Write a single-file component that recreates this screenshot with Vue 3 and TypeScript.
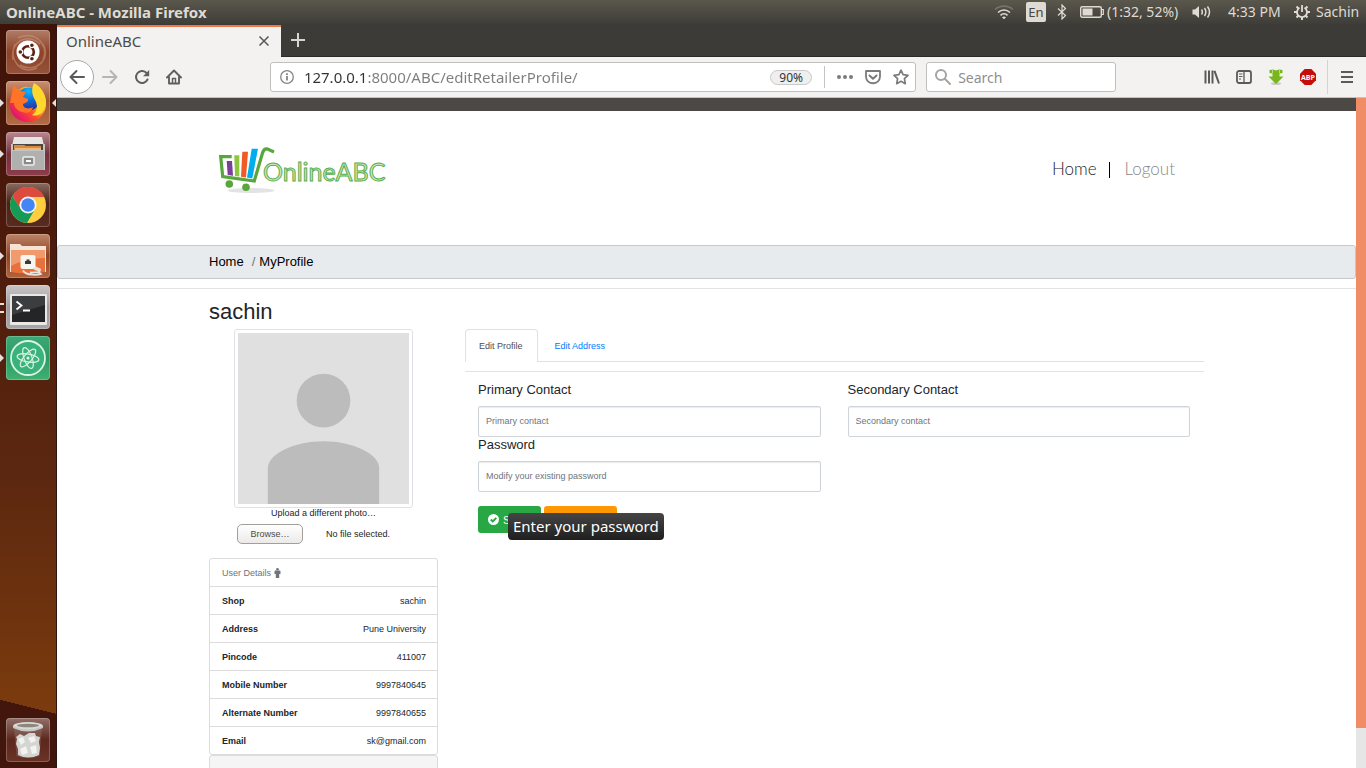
<script setup lang="ts">
import { ref } from 'vue'

interface Detail {
  label: string
  value: string
}

const details: Detail[] = [
  { label: 'Shop', value: 'sachin' },
  { label: 'Address', value: 'Pune University' },
  { label: 'Pincode', value: '411007' },
  { label: 'Mobile Number', value: '9997840645' },
  { label: 'Alternate Number', value: '9997840655' },
  { label: 'Email', value: 'sk@gmail.com' },
]

const tabs: string[] = ['Edit Profile', 'Edit Address']
const activeTab = ref<string>('Edit Profile')
const primary = ref<string>('')
const secondary = ref<string>('')
const password = ref<string>('')
const address = ref<string>('127.0.0.1:8000/ABC/editRetailerProfile/')
const query = ref<string>('')
const filePicker = ref<HTMLInputElement | null>(null)

function reset(): void {
  primary.value = ''
  secondary.value = ''
  password.value = ''
}
</script>

<template>
  <div class="desktop">
    <header class="panel">
      <span class="panel-title">OnlineABC - Mozilla Firefox</span>
      <div class="tray">
        <svg class="t-wifi" width="20" height="16" viewBox="0 0 20 16" fill="none" stroke-width="1.6">
          <path d="M1 5.500C6 1 14 1 19 5.500" stroke="#77746b" />
          <path d="M4 8.500C7.500 5.200 12.500 5.200 16 8.500" stroke="#dfdbd2" />
          <path d="M6.500 11.300C8.500 9.400 11.500 9.400 13.500 11.300" stroke="#dfdbd2" />
          <path d="M8 13.200Q10 11.600 12 13.200L10 15.200Z" fill="#dfdbd2" />
        </svg>
        <span class="t-lang">En</span>
        <svg class="t-bt" width="10" height="16" viewBox="0 0 10 16" fill="none" stroke="#dfdbd2" stroke-width="1.200">
          <path d="M1 4.500L8.500 11.500L5 15V1L8.500 4.500L1 11.500" />
        </svg>
        <svg class="t-bat" width="24" height="14" viewBox="0 0 24 14">
          <rect x="0.700" y="1.700" width="20.600" height="10.600" rx="1.500" fill="none" stroke="#dfdbd2" stroke-width="1.400" />
          <rect x="2.500" y="3.500" width="10" height="7" fill="#dfdbd2" />
          <path d="M21.500 4.500H23.300V9.500H21.500" fill="none" stroke="#dfdbd2" stroke-width="1.200" />
        </svg>
        <span class="t-power">(1:32, 52%)</span>
        <svg class="t-vol" width="20" height="16" viewBox="0 0 20 16" fill="none" stroke="#dfdbd2" stroke-width="1.500">
          <path d="M0.500 5.500H3L7 2V14L3 10.500H0.500Z" fill="#dfdbd2" stroke="none" />
          <path d="M9.500 5.500Q11.200 8 9.500 10.500M12.500 4Q15.200 8 12.500 12M15.500 2.500Q19.500 8 15.500 13.500" />
        </svg>
        <span class="t-clock">4:33 PM</span>
        <svg class="t-gear" width="16" height="16" viewBox="0 0 16 16" fill="none" stroke="#dfdbd2">
          <path d="M5.500 3.800A5 5 0 1 0 10.500 3.800" stroke-width="1.800" />
          <path d="M8 1V8" stroke-width="1.800" />
          <path d="M0 8H3M13 8H16M2.500 2.500L4.500 4.500M13.500 2.500L11.500 4.500M2.500 13.500L4.500 11.500M13.500 13.500L11.500 11.500M8 13V16" stroke-width="2" />
        </svg>
        <span class="t-user">Sachin</span>
      </div>
    </header>

    <div class="workspace">
      <nav class="dock" aria-label="Launcher">
        <button class="app ubuntu" aria-label="Search your computer">
          <svg viewBox="0 0 44 44">
            <path d="M7 30C3 12 22 2 34 14M37 14C46 30 28 44 14 35M12 8C28 0 44 14 37 30M31 38C14 46 2 28 9 14" fill="none" stroke="#d9a58f" stroke-opacity=".45" stroke-width="1.500" />
            <circle cx="22" cy="22" r="11.500" fill="#fff" />
            <circle cx="22" cy="22" r="5.800" fill="none" stroke="#5b2010" stroke-width="2.600" />
            <g stroke="#fff" stroke-width="1.200" fill="#5b2010">
              <circle cx="14.300" cy="22" r="2.400" /><circle cx="25.900" cy="15.300" r="2.400" /><circle cx="25.900" cy="28.700" r="2.400" />
            </g>
          </svg>
        </button>
        <button class="app firefox active running" aria-label="Firefox">
          <svg viewBox="0 0 44 44">
            <defs>
              <linearGradient id="ff" x1="0.900" y1="0.100" x2="0.150" y2="0.850">
                <stop offset="0" stop-color="#fff14a" /><stop offset=".35" stop-color="#ffb21e" /><stop offset=".65" stop-color="#ff4a2f" /><stop offset="1" stop-color="#e4136f" />
              </linearGradient>
              <radialGradient id="globe" cx=".5" cy=".15" r=".9">
                <stop offset="0" stop-color="#12b8f5" /><stop offset=".5" stop-color="#1166d8" /><stop offset="1" stop-color="#2a2a8c" />
              </radialGradient>
            </defs>
            <path d="M5 15L8 5L12 9C17 5 24 5 27 8L29 3C36 8 41 16 40 25C39 34 31 41 22 41C12 41 4 34 4 24C4 20 4 17 5 15Z" fill="url(#ff)" />
            <circle cx="22.500" cy="18" r="11.500" fill="url(#globe)" />
            <path d="M28 2C37 7 42 17 39 26C37 33 31 36 26 34C32 30 32 24 29 19C26 14 25 8 28 2Z" fill="#ffd82e" />
            <path d="M4 22C5 17 6 10 8 4L14 10L20 11L17 16L22 18C23 20 20 22 17 23C17 27 22 29 27 26C26 31 21 33 16 31C10 29 8 25 8 22Z" fill="#ff7426" />
          </svg>
        </button>
        <button class="app files running" aria-label="Files">
          <svg viewBox="0 0 44 44">
            <path d="M8 5H36L39 18H5Z" fill="#e5e5e3" />
            <rect x="7" y="12" width="30" height="7" fill="#4b4745" />
            <path d="M8 13H18L20 14H35V19H8Z" fill="#d98a3e" />
            <path d="M9 16H35V20H9Z" fill="#f0b878" />
            <path d="M5 12H7V18H37V12H39V38H5Z" fill="#c4c4c2" />
            <rect x="6" y="19" width="32" height="19" fill="#b0b0ae" />
            <rect x="17" y="25" width="11" height="8" rx="1" fill="#8a8a88" stroke="#eee" stroke-width="1.500" />
            <rect x="20" y="28" width="5" height="2" fill="#fff" />
          </svg>
        </button>
        <button class="app chrome" aria-label="Chrome">
          <svg viewBox="0 0 44 44">
            <circle cx="22" cy="22" r="18" fill="#ffcd40" />
            <path d="M22 22L6.400 13A18 18 0 0 1 37.600 13L38 14H22Z" fill="#dd4b3e" />
            <path d="M22 22L15 26L6.400 13A18 18 0 0 0 21 40L29 26Z" fill="#159a58" />
            <path d="M6.400 13A18 18 0 0 1 38.200 14H22A8.500 8.500 0 0 0 14 25Z" fill="#dd4b3e" />
            <circle cx="22" cy="22" r="8.500" fill="#f5f5f5" /><circle cx="22" cy="22" r="6.800" fill="#4285f4" />
          </svg>
        </button>
        <button class="app share running" aria-label="Remote folder">
          <svg viewBox="0 0 44 44">
            <path d="M4 10H14L16 12H40V38H4Z" fill="#f6e3d6" />
            <path d="M5 16H39V38Q22 41 5 38Z" fill="#e8713b" />
            <path d="M5 16H39V24Q20 24 5 32Z" fill="#f09a6e" />
            <rect x="14.500" y="21" width="15" height="14" rx="2" fill="#f7f5ee" />
            <path d="M19 30V27H20.500V25.500H23.500V27H25V30Z" fill="#3c3a36" />
            <path d="M17 36.500C20 42 32 41 35 40C33 37 29 39 24 38.500M27 34L33 37M29 33L34 35.500L33 39" fill="none" stroke="#e9e4de" stroke-width="1.800" />
          </svg>
        </button>
        <button class="app terminal running two" aria-label="Terminal">
          <svg viewBox="0 0 44 44">
            <rect x="4" y="9" width="37" height="31" rx="1" fill="#e8e8e6" />
            <rect x="6" y="11" width="33" height="26" fill="#242526" /><path d="M6 11H39V20L6 30Z" fill="#3b3d3e" />
            <path d="M10.500 16.500L15.500 20.500L10.500 24.500M17 25.500H24" fill="none" stroke="#fff" stroke-width="1.800" />
          </svg>
        </button>
        <button class="app atom running" aria-label="Atom">
          <svg viewBox="0 0 44 44" fill="none" stroke="#d9f3e4">
            <circle cx="22" cy="22" r="17" fill="#39b27b" stroke-width="1.800" />
            <g stroke-width="1.200">
              <ellipse cx="22" cy="22" rx="11" ry="4" transform="rotate(10 22 22)" />
              <ellipse cx="22" cy="22" rx="11" ry="4" transform="rotate(70 22 22)" />
              <ellipse cx="22" cy="22" rx="11" ry="4" transform="rotate(130 22 22)" />
            </g>
            <circle cx="22" cy="22" r="1.500" fill="#e9fff3" stroke="none" />
          </svg>
        </button>
        <button class="app trash" aria-label="Trash">
          <svg viewBox="0 0 44 44">
            <path d="M8 10H36L33.500 38Q22 42 10.500 38Z" fill="#a58c84" fill-opacity=".3" />
            <path d="M10 19L14 16L18 18L23 15L29 15L30 18L34 19L33 24L34 30L33 37Q22 42 12 37L12 31L10 26L11 21Z" fill="#d4d4d1" />
            <path d="M12 21L17 19L19 24L15 27ZM22 20L28 18L30 23L25 25ZM14 31L20 28L22 35L16 37ZM24 29L30 27L31 35L26 36Z" fill="#f2f2f1" />
            <ellipse cx="22" cy="8" rx="15" ry="4" fill="#d7dad5" /><ellipse cx="22" cy="7.500" rx="11" ry="1.800" fill="#8f8680" />
            <path d="M7 8Q22 15 37 8V10Q22 17 7 10Z" fill="#c5c9c4" />
          </svg>
        </button>
      </nav>

      <main class="browser">
        <div class="tabstrip">
          <div class="tab">
            <span>OnlineABC</span>
            <button class="plain" aria-label="Close tab">
              <svg width="12" height="12" viewBox="0 0 12 12" fill="none" stroke="#5c5c5c" stroke-width="1.600"><path d="M1.500 1.500L10.500 10.500M10.500 1.500L1.500 10.500" /></svg>
            </button>
          </div>
          <button class="plain newtab" aria-label="New tab">
            <svg width="14" height="14" viewBox="0 0 14 14" fill="none" stroke="#d8d5cc" stroke-width="2"><path d="M7 0V14M0 7H14" /></svg>
          </button>
        </div>

        <div class="toolbar">
          <div class="nav-buttons">
            <button class="plain back" aria-label="Back">
              <svg width="16" height="16" viewBox="0 0 16 16" fill="none" stroke="#5a5a5a" stroke-width="2" stroke-linecap="round" stroke-linejoin="round"><path d="M15 8H1.500M7.500 2L1.500 8L7.500 14" /></svg>
            </button>
            <button class="plain" aria-label="Forward" disabled>
              <svg width="16" height="16" viewBox="0 0 16 16" fill="none" stroke="#b6b5b4" stroke-width="2" stroke-linecap="round" stroke-linejoin="round"><path d="M1 8H14.500M8.500 2L14.500 8L8.500 14" /></svg>
            </button>
            <button class="plain" aria-label="Reload">
              <svg width="16" height="16" viewBox="0 0 16 16" fill="none" stroke="#5f5f5f" stroke-width="2" stroke-linecap="round"><path d="M13.500 10.500A6 6 0 1 1 12 3.500L13 4.500" /><path d="M15.200 1V7.200H9Z" fill="#5f5f5f" stroke="none" /></svg>
            </button>
            <button class="plain" aria-label="Home page">
              <svg width="16" height="16" viewBox="0 0 16 16" fill="none" stroke="#5f5f5f" stroke-width="1.900" stroke-linejoin="round" stroke-linecap="round"><path d="M1 8.500L8 1.500L15 8.500M3 8V14.500H13V8" /><path d="M6.500 14V9.500H9.500V14" stroke-width="1.500" /></svg>
            </button>
          </div>
          <div class="spring"></div>
          <div class="field urlbar">
            <svg width="14" height="14" viewBox="0 0 14 14" fill="none" stroke="#858585" stroke-width="1.300"><circle cx="7" cy="7" r="6.300" /><path d="M7 6V10.500M7 3.300V5" stroke-width="1.800" /></svg>
            <input v-model="address" type="text" aria-label="Address">
            <button class="plain zoom">90%</button>
            <span class="rule"></span>
            <button class="plain" aria-label="Page actions">
              <svg width="16" height="16" viewBox="0 0 16 16" fill="#7b7b7b"><circle cx="2" cy="8" r="2" /><circle cx="8" cy="8" r="2" /><circle cx="14" cy="8" r="2" /></svg>
            </button>
            <button class="plain" aria-label="Save to Pocket">
              <svg width="16" height="16" viewBox="0 0 16 16" fill="none" stroke="#7b7b7b" stroke-width="1.800" stroke-linecap="round" stroke-linejoin="round"><path d="M1 2H15V7.500C15 16.500 1 16.500 1 7.500Z" /><path d="M4.500 6.500L8 9.800L11.500 6.500" stroke-width="2" /></svg>
            </button>
            <button class="plain" aria-label="Bookmark this page">
              <svg width="16" height="16" viewBox="0 0 16 16" fill="none" stroke="#7b7b7b" stroke-width="1.700" stroke-linejoin="round"><path d="M8 1.200L10.100 5.700L15 6.300L11.400 9.700L12.300 14.700L8 12.300L3.700 14.700L4.600 9.700L1 6.300L5.900 5.700Z" /></svg>
            </button>
          </div>
          <div class="field searchbar">
            <svg width="16" height="16" viewBox="0 0 16 16" fill="none" stroke="#a4a4a4" stroke-width="2" stroke-linecap="round"><circle cx="6" cy="6" r="5" /><path d="M10 10L15 15" /></svg>
            <input v-model="query" type="text" placeholder="Search" aria-label="Search the web">
          </div>
          <div class="spring"></div>
          <div class="tools">
            <button class="plain" aria-label="Library">
              <svg width="16" height="16" viewBox="0 0 16 16" fill="none" stroke="#5a5a5a" stroke-width="2"><path d="M1.500 1.500V14.500M5 1.500V14.500M8.500 1.500V14.500M10.500 1.800L15 14.500" /></svg>
            </button>
            <button class="plain" aria-label="Sidebars">
              <svg width="16" height="16" viewBox="0 0 16 16" fill="none" stroke="#5a5a5a" stroke-width="1.800"><rect x="1" y="2" width="14" height="12" rx="2" /><path d="M8 2V14" stroke-width="1.300" /><path d="M3 5H6.500M3 7.500H6.500M3 10H5" stroke-width="1" /></svg>
            </button>
            <button class="plain" aria-label="Downloads">
              <svg width="16" height="16" viewBox="0 0 16 16"><ellipse cx="8" cy="14.500" rx="5" ry="1.500" fill="#c9c9c9" /><path d="M1.500 1L5 0.500L8 1.500L11 0.500L14.500 1V4L11.500 4.500V7.500H15.500L8 15L0.500 7.500H4.500V4.500L1.500 4Z" fill="#79b51c" /><path d="M4.500 1V4M11.500 1V4" stroke="#b9dc7f" /></svg>
            </button>
            <button class="plain" aria-label="Adblock Plus">
              <svg width="16" height="16" viewBox="0 0 16 16"><path d="M4.700 0H11.300L16 4.700V11.300L11.300 16H4.700L0 11.300V4.700Z" fill="#c70d0c" /><text x="8" y="11" text-anchor="middle" fill="#fff" font-family="Open Sans, sans-serif" font-size="7" font-weight="700">ABP</text></svg>
            </button>
            <span class="tool-rule"></span>
            <button class="plain" aria-label="Menu">
              <svg width="12" height="12" viewBox="0 0 12 12" fill="none" stroke="#5a5a5a" stroke-width="2"><path d="M0 1H12M0 6H12M0 11H12" /></svg>
            </button>
          </div>
        </div>

        <div class="viewport">
          <div class="page">
            <div class="strip"></div>
            <div class="site-header">
              <div class="container site-head-row">
                <svg class="logo" width="180" height="56" viewBox="0 0 180 56" role="img" aria-label="OnlineABC">
                  <ellipse cx="36" cy="48.500" rx="23.500" ry="2.500" fill="#e3e3e3" />
                  <path d="M11.700 19H17L18 33.700L12.700 33Z" fill="#7b3f98" />
                  <path d="M19.300 13.300H24.300V34.500L20 34Z" fill="#8dc63f" />
                  <path d="M27.300 9.700H33L31 35.500L26 34.800Z" fill="#f15a24" />
                  <path d="M36.700 6.700H43L37.300 36.500L32 35.500Z" fill="#00adee" />
                  <path d="M16.700 14.700H5.700L7.700 34.700L39.300 39L47.500 11Q48.800 6.500 52 6.800L59 10" fill="none" stroke="#58a63c" stroke-width="3.200" />
                  <circle cx="14.300" cy="42" r="3.800" fill="#58a63c" /><circle cx="31" cy="45.300" r="3.800" fill="#58a63c" />
                  <text class="wordmark" x="48" y="39">OnlineABC</text>
                </svg>
                <nav class="site-nav">
                  <a class="home" href="#home">Home</a>
                  <a class="logout" href="#logout">Logout</a>
                </nav>
              </div>
            </div>
            <nav class="crumbs" aria-label="Breadcrumb">
              <div class="container">
                <a href="#home">Home</a><span>/</span><a href="#profile">MyProfile</a>
              </div>
            </nav>
            <hr>

            <div class="container profile">
              <h3>sachin</h3>
              <div class="columns">
                <aside>
                  <div class="photo">
                    <svg class="avatar" viewBox="0 0 172 172" role="img" aria-label="Profile photo">
                      <rect width="172" height="172" fill="#e0e0e0" /><circle cx="86" cy="68" r="27" fill="#bcbcbc" />
                      <path d="M30 172V136C30 122 56 109 86 109S142 122 142 136V172Z" fill="#bcbcbc" />
                    </svg>
                    <label class="upload" for="photo-file">Upload a different photo…</label>
                    <div class="picker">
                      <button class="browse" type="button" @click="filePicker?.click()">Browse…</button>
                      <span>No file selected.</span>
                      <input id="photo-file" ref="filePicker" type="file" hidden>
                    </div>
                  </div>
                  <ul class="details">
                    <li class="head">User Details
                      <svg width="7" height="10" viewBox="0 0 7 10" fill="#6c757d"><circle cx="3.500" cy="1.300" r="1.300" /><path d="M1.500 2.500H5.500Q6.500 2.500 6.500 3.500V6H5.200V10H1.800V6H0.500V3.500Q0.500 2.500 1.500 2.500Z" /></svg>
                    </li>
                    <li v-for="d in details" :key="d.label"><strong>{{ d.label }}</strong><span>{{ d.value }}</span></li>
                  </ul>
                  <div class="card"></div>
                </aside>

                <section>
                  <div class="tabs" role="tablist">
                    <button v-for="t in tabs" :key="t" type="button" role="tab" :aria-selected="t === activeTab" :class="{ on: t === activeTab }" @click="activeTab = t">{{ t }}</button>
                  </div>
                  <form @submit.prevent>
                    <div class="fields">
                      <div class="group">
                        <label for="primary">Primary Contact</label>
                        <input id="primary" v-model="primary" type="text" placeholder="Primary contact">
                      </div>
                      <div class="group">
                        <label for="secondary">Secondary Contact</label>
                        <input id="secondary" v-model="secondary" type="text" placeholder="Secondary contact">
                      </div>
                      <div class="group">
                        <label for="password">Password</label>
                        <input id="password" v-model="password" type="password" placeholder="Modify your existing password">
                      </div>
                    </div>
                    <div class="actions">
                      <button class="save" type="submit">
                        <svg width="11" height="11" viewBox="0 0 11 11"><circle cx="5.500" cy="5.500" r="5.500" fill="#fff" /><path d="M2.800 5.500L4.800 7.500L8.300 3.800" fill="none" stroke="#28a745" stroke-width="1.900" /></svg>
                        Save
                      </button>
                      <button class="reset" type="button" aria-label="Reset" @click="reset"></button>
                      <div class="tooltip" role="tooltip">Enter your password</div>
                    </div>
                  </form>
                </section>
              </div>
            </div>
          </div>
          <div class="scroll"><div class="thumb"></div></div>
        </div>
      </main>
    </div>
  </div>
</template>

<style>
body { margin: 0; overflow: hidden; }
</style>

<style scoped>
* { box-sizing: border-box; }
svg { display: block; flex: none; }
button, input { font: inherit; margin: 0; }
.plain { display: flex; align-items: center; justify-content: center; padding: 0; border: 0; background: none; }
.desktop { height: 100vh; display: flex; flex-direction: column; overflow: hidden; font-family: "Noto Sans", sans-serif; }

.panel { flex: none; height: 24px; display: flex; align-items: center; justify-content: space-between; padding: 0 5px 1px 6px; background: linear-gradient(#5a574d, #3e3d38); color: #dfdbd2; font-size: 14px; white-space: nowrap; }
.panel-title { font-weight: 700; font-size: 15px; }
.tray { display: flex; align-items: center; }
.t-lang { margin-left: 12px; width: 20px; height: 20px; border-radius: 2px; background: #dfdbd2; color: #474640; font-size: 13px; line-height: 20px; text-align: center; }
.t-bt { margin-left: 11px; }
.t-bat { margin-left: 13px; }
.t-power { margin-left: 3px; width: 73px; }
.t-vol { margin-left: 12px; }
.t-clock { margin-left: 16px; width: 53px; }
.t-gear { margin-left: 13px; }
.t-user { margin-left: 6px; width: 45px; }

.workspace { flex: 1; min-height: 0; display: flex; }
.dock { flex: none; width: 57px; display: flex; flex-direction: column; align-items: center; gap: 7px; padding: 6px 0; border-right: 1px solid #2e1511; background: linear-gradient(194deg, transparent 91%, #43160d 91%), linear-gradient(#3f1208, #4d1b0c 30%, #5b2710 60%, #7b3b0d 92%); }
.app { position: relative; flex: none; width: 44px; height: 44px; padding: 0; border: 0; border-radius: 4px; box-shadow: inset 0 0 0 1px rgba(255, 255, 255, 0.22); }
.app svg { width: 44px; height: 44px; }
.ubuntu { background: linear-gradient(#b17c68, #8c4327 50%, #95523a); }
.firefox { background: linear-gradient(#c99173, #9d5530 45%, #b56b45); }
.files { background: linear-gradient(#b98890, #74303e 50%, #8e3c4c); }
.chrome { background: linear-gradient(#8a6c62, #4a2219 45%, #5a2b20); }
.share { background: linear-gradient(#bd8467, #8e4425 50%, #b3623c); }
.terminal { background: linear-gradient(#cac5c6, #a09a9c 50%, #aaa5a7); }
.atom { background: linear-gradient(#3ca976, #2c9a61 50%, #3fb172); }
.trash { margin-top: auto; background: linear-gradient(#927068, #5c271c 50%, #6a3328); }
.running::before { content: ""; position: absolute; left: -6px; top: 18px; border: 4px solid transparent; border-right: 0; border-left-color: #e5e0dd; }
.active::after { content: ""; position: absolute; right: -6px; top: 18px; border: 4px solid transparent; border-left: 0; border-right-color: #e5e0dd; }
.two::before { width: 4px; height: 6px; border: 0; border-top: 2px solid #e5e0dd; border-bottom: 2px solid #e5e0dd; }

.browser { flex: 1; min-width: 0; display: flex; flex-direction: column; }
.tabstrip { flex: none; height: 33px; padding-top: 1px; display: flex; background: #3c3b37; border-bottom: 1px solid #2b2a27; }
.tab { width: 224px; height: 32px; margin-bottom: -1px; padding: 0 11px 3px 9px; display: flex; align-items: center; justify-content: space-between; border-top: 2px solid #f07746; background: #f3f2f1; color: #4c4c4c; font-size: 15px; }
.newtab { margin-left: 10px; padding-bottom: 2px; }
.toolbar { flex: none; height: 41px; display: flex; align-items: center; padding: 0 13px 0 3px; background: #f3f2f1; border-bottom: 1px solid #c5c2bf; }
.nav-buttons { display: flex; align-items: center; gap: 16px; }
.back { width: 34px; height: 34px; margin-right: -8px; border: 1px solid #a9a8a7; border-radius: 50%; background: #fff; }
.spring { flex: 87 1 0; }
.field { height: 30px; display: flex; align-items: center; border: 1px solid #c1bfbd; border-radius: 3px; background: #fff; font-size: 14px; }
.field input { min-width: 0; border: 0; padding: 0; outline: 0; background: none; }
.urlbar { flex: 623 1 0; padding: 0 6px 0 9px; gap: 12px; }
.urlbar input { flex: 1; margin-left: -2px; font-size: 15px; color: transparent; background: linear-gradient(90deg, #333 64px, #7d7d7d 64px); background-clip: text; -webkit-background-clip: text; }
.zoom { width: 42px; height: 15px; border: 1px solid #c9c9c9; border-radius: 8px; background: #efefef; color: #333; font-size: 12px; }
.rule { width: 1px; height: 22px; background: #c4c4c4; }
.searchbar { width: 190px; margin-left: 10px; padding: 0 8px; gap: 7px; }
.searchbar input::placeholder { color: #8f8f8f; opacity: 1; }
.tools { display: flex; align-items: center; gap: 16px; }
.tool-rule { width: 1px; height: 34px; margin: 0 -3px 0 -5px; background: #d5d3d1; }

.viewport { flex: 1; min-height: 0; display: flex; }
.page { flex: 1; min-width: 0; overflow: hidden; background: #fff; font-family: "Liberation Sans", Arial, sans-serif; font-size: 13px; color: #212529; }
.scroll { flex: none; width: 10px; background: #e6e6e6; }
.thumb { height: 94%; background: #f08d66; }
.strip { height: 13px; background: #4c4843; }
.site-header { height: 134px; }
.container { width: 100%; max-width: 995px; margin: 0 auto; }
.site-head-row { display: flex; justify-content: space-between; align-items: flex-start; padding: 31px 29px 0 6px; }
.wordmark { font-family: Lato, sans-serif; font-size: 25px; fill: #cfeac6; stroke: #58ad49; stroke-width: 1px; }
.site-nav { display: flex; align-items: center; padding-top: 17px; font-family: Lato, sans-serif; font-weight: 300; font-size: 17px; line-height: 20px; }
.site-nav a { text-decoration: none; }
.home { color: #222; }
.logout { margin-left: 12px; padding-left: 16px; color: #888; background: linear-gradient(#000, #000) 0 3px / 1px 16px no-repeat; }
.crumbs { height: 34px; border: 1px solid #c6c9cc; border-radius: 3px; background: #e8ebee; line-height: 32px; }
.crumbs a { color: #000; text-decoration: none; }
.crumbs span { color: #6c757d; padding: 0 4px 0 8px; }
hr { margin: 9px 0 0; border: 0; border-top: 1px solid #e3e3e3; }
h3 { margin: 0; padding: 10px 0 5px; font-size: 22px; font-weight: 400; line-height: 25px; }
.columns { display: flex; gap: 27px; align-items: flex-start; font-size: 9px; }
aside { flex: none; width: 229px; }
.photo { display: flex; flex-direction: column; align-items: center; }
.avatar { width: 179px; height: 179px; padding: 3px; border: 1px solid #dee2e6; border-radius: 3px; }
.upload { line-height: 10px; }
.picker { width: 100%; display: flex; align-items: center; margin-top: 6px; padding-left: 28px; gap: 23px; }
.browse { width: 66px; height: 20px; padding: 0; border: 1px solid #a3a09c; border-radius: 5px; background: linear-gradient(#fff, #eceae8); color: #4c4c4c; }
.details { margin: 14px 0 0; padding: 0; list-style: none; border: 1px solid #dcdcdc; border-radius: 3px; }
.details li { display: flex; justify-content: space-between; height: 28px; padding: 0 11px 0 12px; line-height: 28px; border-bottom: 1px solid #dcdcdc; }
.details li:last-child { height: 27px; border-bottom: 0; }
.details .head { justify-content: flex-start; align-items: center; gap: 3px; color: #6c757d; }
.card { height: 60px; border: 1px solid #dcdcdc; border-radius: 3px; background: #f5f5f5; }
section { flex: 1; min-width: 0; }
.tabs { display: flex; height: 33px; border-bottom: 1px solid #dee2e6; }
.tabs button { height: 33px; padding: 0 14px 0 13px; border: 1px solid transparent; border-bottom: 0; background: none; color: #007bff; }
.tabs button + button { margin-left: 3px; }
.tabs .on { border-color: #dee2e6; border-radius: 4px 4px 0 0; background: #fff; color: #495057; }
form { margin-top: 9px; padding: 10px 14px 0 13px; border-top: 1px solid #e3e3e3; }
.fields { display: grid; grid-template-columns: 1fr 1fr; column-gap: 27px; }
.group { display: flex; flex-direction: column; }
.group label { font-size: 13px; line-height: 16px; margin-bottom: 8px; }
.group input { height: 31px; padding: 0 7px 1px; border: 1px solid #ced4da; border-radius: 2px; box-shadow: inset 0 1px 1px rgba(0, 0, 0, 0.08); outline: 0; background: #fff; color: #495057; }
.group input::placeholder { color: #6c757d; opacity: 1; }
.actions { position: relative; display: flex; gap: 3px; margin-top: 14px; }
.actions button { height: 27px; border: 0; border-radius: 3px; color: #fff; font-size: 11px; }
.save { display: flex; align-items: center; gap: 4px; width: 63px; padding: 0 0 0 10px; background: #28a745; }
.reset { width: 73px; background: #ff9800; }
.tooltip { position: absolute; left: 30px; top: 7px; padding: 0 5px; border-radius: 4px; background: linear-gradient(#454545, #1f1f1f); color: #fff; font: 15px/27px "Noto Sans", sans-serif; white-space: nowrap; }
</style>
